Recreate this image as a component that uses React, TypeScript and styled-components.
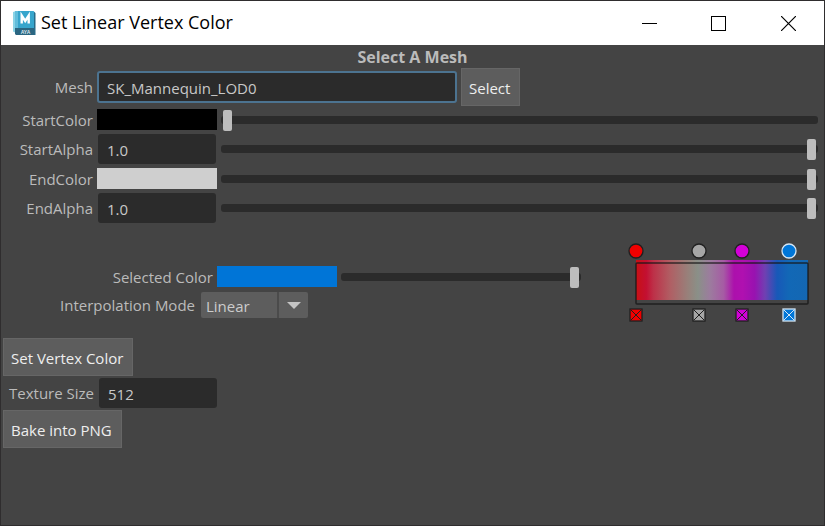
import React, { useState } from "react";
import styled, { createGlobalStyle } from "styled-components";

const GlobalStyle = createGlobalStyle`
  *, *::before, *::after { box-sizing: border-box; }
  html, body, #root { height: 100%; margin: 0; }
  body {
    background: #444444;
    color: #bbbbbb;
    font-family: "Open Sans", "Noto Sans", sans-serif;
    font-size: 15px;
    line-height: 20px;
  }
  button, input, select { font: inherit; color: inherit; margin: 0; }
`;

const Window = styled.div`
  display: flex;
  flex-direction: column;
  min-height: 100%;
  border: 1px solid #2f2d2e;
  background: #444444;
`;

const TitleBar = styled.header`
  display: flex;
  align-items: center;
  height: 44px;
  padding-left: 12px;
  background: #ffffff;
  color: #000000;
`;

const WindowTitle = styled.h1`
  flex: 1;
  margin: 0 0 2px 4px;
  font-size: 18px;
  font-weight: 400;
  line-height: 24px;
  white-space: nowrap;
`;

const CaptionButton = styled.button<{ $wide?: boolean }>`
  display: flex;
  align-items: center;
  justify-content: center;
  width: ${(p) => (p.$wide ? 71 : 69)}px;
  height: 44px;
  padding: 0;
  border: 0;
  background: transparent;
`;

const Body = styled.main`
  flex: 1;
`;

const Heading = styled.h2`
  margin: 0;
  padding: 2px 0 1px;
  font-size: 16px;
  line-height: 20px;
  font-weight: 700;
  text-align: center;
`;

const MeshForm = styled.section`
  display: flex;
  flex-direction: column;
  gap: 4px;
  padding-right: 6px;
`;

const FormRow = styled.div<{ $labelWidth?: number }>`
  display: grid;
  grid-template-columns: ${(p) => p.$labelWidth ?? 92}px 120px minmax(0, 1fr);
  column-gap: 4px;
  align-items: center;
`;

const MeshRow = styled.div`
  display: grid;
  grid-template-columns: 92px 360px auto;
  column-gap: 4px;
  align-items: center;
  justify-content: start;
  margin-bottom: -1px;
`;

const Label = styled.label`
  text-align: right;
  white-space: nowrap;
`;

const Field = styled.input<{ $focused?: boolean }>`
  width: 100%;
  height: ${(p) => (p.$focused ? 32 : 30)}px;
  padding: 2px ${(p) => (p.$focused ? 8 : 7)}px 0;
  border: 2px solid ${(p) => (p.$focused ? "#4c7390" : "#2b2b2b")};
  border-radius: 3px;
  outline: 0;
  background: #2b2b2b;
  color: #c8c8c8;
`;

const FieldCell = styled.div`
  padding: 0 1px;
  display: flex;
`;

const Button = styled.button`
  height: 38px;
  padding: 2px 9px 0 7px;
  border: 1px solid #666666;
  background: #5d5d5d;
  color: #eeeeee;
  white-space: nowrap;
`;

const Swatch = styled.button<{ $color: string }>`
  height: 21px;
  padding: 0;
  border: 0;
  background: ${(p) => p.$color};
`;

const Slider = styled.input.attrs({ type: "range", min: 0, max: 100 })`
  appearance: none;
  display: block;
  width: 100%;
  height: 21px;
  background: transparent;

  &::-webkit-slider-runnable-track {
    height: 8px;
    padding: 0 2px;
    border-radius: 3px;
    background: #2b2b2b;
  }
  &::-webkit-slider-thumb {
    appearance: none;
    width: 9px;
    height: 21px;
    margin-top: -6px;
    border-radius: 2px;
    background: #bdbdbd;
  }
`;

const RampSection = styled.section`
  display: flex;
  justify-content: space-between;
  padding: 18px 9px 0 0;
`;

const RampControls = styled.div`
  flex: 0 1 580px;
  min-width: 0;
  display: flex;
  flex-direction: column;
  gap: 5px;
  padding-top: 25px;
`;

const ModeRow = styled.div`
  display: grid;
  grid-template-columns: 194px 107px;
  column-gap: 6px;
  align-items: center;
`;

const Combo = styled.div`
  display: grid;
  grid-template-columns: minmax(0, 1fr) 31px;
  align-items: center;
  height: 26px;
  border-radius: 2px;
  background: #5d5d5d;
`;

const ComboSelect = styled.select`
  grid-area: 1 / 1 / 2 / 3;
  appearance: none;
  height: 26px;
  padding: 2px 32px 0 5px;
  border: 0;
  background: transparent;
  color: #cccccc;
`;

const ComboArrow = styled.span`
  grid-area: 1 / 2 / 2 / 3;
  display: flex;
  align-items: center;
  justify-content: center;
  height: 26px;
  border-left: 2px solid #4b4b4b;
  pointer-events: none;
`;

const Actions = styled.section`
  display: flex;
  flex-direction: column;
  align-items: flex-start;
  gap: 2px;
  padding: 13px 2px 0;
`;

const TextureRow = styled.div`
  display: grid;
  grid-template-columns: 91px 118px;
  column-gap: 5px;
  align-items: center;
`;

const RampDrawing = styled.svg`
  flex: none;
  display: block;
`;

function MayaIcon() {
  return (
    <svg width="24" height="26" viewBox="0 0 24 26" aria-hidden="true">
      <path d="M0 2 3 1V23L0 21.500Z" fill="#8ad3e6" />
      <path d="M2 1H20.500L22 2.500V18H2Z" fill="#37a5cc" />
      <path d="M2 1H5V18H2Z" fill="#62bddb" />
      <path d="M2 18H22V25H3L2 24Z" fill="#2b6681" />
      <path d="M21 2 22.500 3V25H21Z" fill="#286b88" />
      <path d="M8.700 13.500V5.500L12.200 11 15.700 5.500V13.500" fill="none" stroke="#fff" strokeWidth="2.400" />
      <text x="12.500" y="23.500" fill="#dceaf0" fontSize="5" fontWeight="700" textAnchor="middle" fontFamily="Liberation Sans, sans-serif">AYA</text>
    </svg>
  );
}

type Stop = { x: number; color: string; active?: boolean };

const STOPS: Stop[] = [
  { x: 8, color: "#f00000" },
  { x: 71, color: "#a6a6a6" },
  { x: 114, color: "#d400d8" },
  { x: 161, color: "#0076d8", active: true },
];

const RAMP: [number, string][] = [
  [0, "#c81014"],
  [6, "#c31032"],
  [10, "#bd3048"],
  [20, "#b05f64"],
  [30, "#98807a"],
  [36, "#8a9088"],
  [43, "#9c7c9e"],
  [51, "#a65ba4"],
  [57, "#ac10ac"],
  [62, "#b010b0"],
  [69, "#9812b0"],
  [75, "#7040b2"],
  [82, "#1858b8"],
  [89, "#1268b6"],
  [100, "#1467b2"],
];

function ColorRamp() {
  return (
    <RampDrawing width="187" height="84" viewBox="0 0 187 84" role="img" aria-label="Color ramp">
      <defs>
        <linearGradient id="ramp">
          {RAMP.map(([at, color]) => (
            <stop key={at} offset={`${at}%`} stopColor={color} />
          ))}
        </linearGradient>
      </defs>
      <rect x="8" y="19" width="172" height="40" fill="url(#ramp)" />
      <rect x="8" y="22" width="172" height="41" rx="1" fill="none" stroke="#171717" strokeOpacity="0.8" strokeWidth="1.500" />
      {STOPS.map(({ x, color, active }) => (
        <g key={x} stroke={active ? "#d5e6f5" : "#202020"} strokeWidth="1.300">
          <circle cx={x} cy="10" r="7" fill={color} />
          <rect x={x - 6} y="68" width="12" height="12" fill={color} />
          <path d={`M${x - 5} 69l10 10m0-10l-10 10`} fill="none" strokeWidth="1" />
        </g>
      ))}
    </RampDrawing>
  );
}

type ColorRowProps = { id: string; label: string; color: string; level: number; labelWidth?: number };

function ColorRow({ id, label, color, level, labelWidth }: ColorRowProps) {
  return (
    <FormRow $labelWidth={labelWidth}>
      <Label htmlFor={id}>{label}</Label>
      <Swatch type="button" $color={color} aria-label={`${label} swatch`} />
      <Slider id={id} defaultValue={level} />
    </FormRow>
  );
}

function AlphaRow({ id, label }: { id: string; label: string }) {
  const [value, setValue] = useState("1.0");
  return (
    <FormRow>
      <Label htmlFor={id}>{label}</Label>
      <FieldCell>
        <Field id={id} value={value} onChange={(e) => setValue(e.target.value)} />
      </FieldCell>
      <Slider
        aria-label={`${label} slider`}
        value={Number(value) * 100 || 0}
        onChange={(e) => setValue((Number(e.target.value) / 100).toFixed(1))}
      />
    </FormRow>
  );
}

export default function App() {
  return (
    <>
      <GlobalStyle />
      <Window>
        <TitleBar>
          <MayaIcon />
          <WindowTitle>Set Linear Vertex Color</WindowTitle>
          <CaptionButton type="button" aria-label="Minimize">
            <svg width="15" height="15"><path d="M0 7.500H15" stroke="#000" /></svg>
          </CaptionButton>
          <CaptionButton type="button" aria-label="Maximize">
            <svg width="15" height="15"><rect x="0.500" y="0.500" width="14" height="14" fill="none" stroke="#000" /></svg>
          </CaptionButton>
          <CaptionButton type="button" $wide aria-label="Close">
            <svg width="15" height="15"><path d="M0 0 15 15M15 0 0 15" stroke="#000" strokeWidth="1.200" /></svg>
          </CaptionButton>
        </TitleBar>
        <Body>
          <Heading>Select A Mesh</Heading>
          <MeshForm>
            <MeshRow>
              <Label htmlFor="mesh">Mesh</Label>
              <Field id="mesh" $focused defaultValue="SK_Mannequin_LOD0" />
              <Button type="button">Select</Button>
            </MeshRow>
            <ColorRow id="start-color" label="StartColor" color="#000000" level={0} />
            <AlphaRow id="start-alpha" label="StartAlpha" />
            <ColorRow id="end-color" label="EndColor" color="#cfcfcf" level={100} />
            <AlphaRow id="end-alpha" label="EndAlpha" />
          </MeshForm>
          <RampSection>
            <RampControls>
              <ColorRow id="selected-color" label="Selected Color" color="#0075d7" level={100} labelWidth={212} />
              <ModeRow>
                <Label htmlFor="mode">Interpolation Mode</Label>
                <Combo>
                  <ComboSelect id="mode" defaultValue="Linear">
                    <option>None</option>
                    <option>Linear</option>
                    <option>Smooth</option>
                    <option>Spline</option>
                  </ComboSelect>
                  <ComboArrow>
                    <svg width="14" height="7"><path d="M0 0H14L7 7Z" fill="#c4c4c4" /></svg>
                  </ComboArrow>
                </Combo>
              </ModeRow>
            </RampControls>
            <ColorRamp />
          </RampSection>
          <Actions>
            <Button type="button">Set Vertex Color</Button>
            <TextureRow>
              <Label htmlFor="texture-size">Texture Size</Label>
              <Field id="texture-size" defaultValue="512" />
            </TextureRow>
            <Button type="button">Bake into PNG</Button>
          </Actions>
        </Body>
      </Window>
    </>
  );
}
